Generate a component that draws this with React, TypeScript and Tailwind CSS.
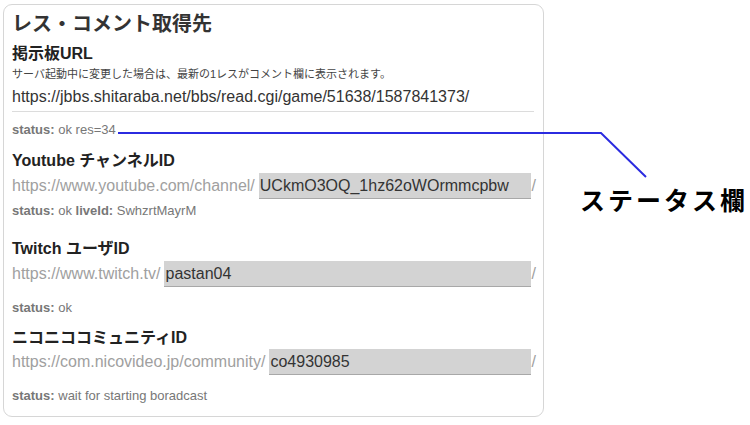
import React from "react";

const font = { fontFamily: '"Liberation Sans", Arial, "Noto Sans CJK JP", sans-serif' };

function Status({ children }: { children: React.ReactNode }) {
  return <div className="h-[16px] text-[13px] leading-[16px] text-[#777]">{children}</div>;
}

function InputRow({ prefix, value }: { prefix: string; value: string }) {
  return (
    <div className="flex h-[26px] items-center text-[16px] leading-[20px]">
      <span className="text-[#a0a0a0] whitespace-nowrap">{prefix}</span>
      <div className="ml-[4px] flex h-[26px] flex-1 items-center border-b border-[#a8a8a8] bg-[#d3d3d3] pl-[1px] text-[#333]">
        {value}
      </div>
      <span className="ml-[1px] mr-[-1px] text-[#a0a0a0]">/</span>
    </div>
  );
}

export default function App() {
  return (
    <div className="relative h-[425px] w-[750px] bg-white" style={font}>
      <div className="ml-[3px] mt-[4px] w-[541px] rounded-[9px] border border-[#d6d6d6] pb-[12px] pl-[8px] pr-[8px] pt-[5px]">
        <div className="h-[28px] text-[20px] font-bold leading-[28px] text-[#333]">レス・コメント取得先</div>
        <div className="mt-[4px] h-[24px] text-[16px] font-bold leading-[24px] text-[#222]">掲示板URL</div>
        <div className="h-[16px] text-[11px] leading-[16px] text-[#444]">
          サーバ起動中に変更した場合は、最新の1レスがコメント欄に表示されます。
        </div>
        <div className="mt-[3px] h-[24px] text-[16px] leading-[24px] text-[#333]">
          https://jbbs.shitaraba.net/bbs/read.cgi/game/51638/1587841373/
        </div>
        <div className="mr-[1px] mt-[2px] h-px bg-[#dcdcdc]" />
        <div className="mt-[10px]">
          <Status>
            <b>status:</b> ok res=34
          </Status>
        </div>
        <div className="mt-[11px] h-[24px] text-[16px] font-bold leading-[24px] text-[#222]">Youtube チャンネルID</div>
        <InputRow prefix="https://www.youtube.com/channel/" value="UCkmO3OQ_1hz62oWOrmmcpbw" />
        <div className="mt-[4px]">
          <Status>
            <b>status:</b> ok <b>liveId:</b> SwhzrtMayrM
          </Status>
        </div>
        <div className="mt-[18px] h-[24px] text-[16px] font-bold leading-[24px] text-[#222]">Twitch ユーザID</div>
        <InputRow prefix="https://www.twitch.tv/" value="pastan04" />
        <div className="mt-[13px]">
          <Status>
            <b>status:</b> ok
          </Status>
        </div>
        <div className="mt-[10px] h-[23px] text-[16px] font-bold leading-[24px] text-[#222]">ニコニココミュニティID</div>
        <InputRow prefix="https://com.nicovideo.jp/community/" value="co4930985" />
        <div className="mt-[13px]">
          <Status>
            <b>status:</b> wait for starting boradcast
          </Status>
        </div>
      </div>

      <svg className="absolute left-0 top-0" width="750" height="425" viewBox="0 0 750 425">
        <polyline points="118,129 601,129 646,173" fill="none" stroke="#2b2be0" strokeWidth="2" />
      </svg>
      <div
        className="absolute left-[580px] top-[180px] text-[25px] font-bold leading-[30px] tracking-[3px] text-black"
        style={{ fontFamily: '"Noto Sans CJK JP", sans-serif' }}
      >
        ステータス欄
      </div>
    </div>
  );
}
